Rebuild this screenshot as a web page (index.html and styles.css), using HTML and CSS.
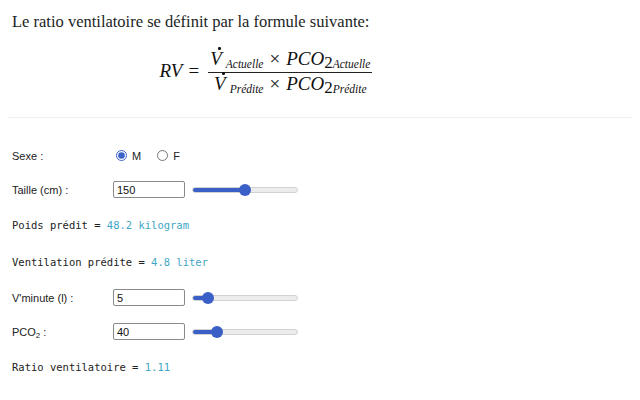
FILE: index.html
```html
<!DOCTYPE html>
<html lang="fr">
<head>
<meta charset="utf-8">
<link rel="stylesheet" href="styles.css">
</head>
<body>
<p class="intro">Le ratio ventilatoire se définit par la formule suivante:</p>
<div class="mathwrap">
  <div class="math">
    <span class="mi">RV</span>
    <span class="eq">=</span>
    <span class="frac">
      <span class="num"><span class="mi vdot">V</span><span class="sub">Actuelle</span><span class="times">×</span><span class="mi">PCO</span><span class="mn">2</span><span class="sub sub2">Actuelle</span></span>
      <span class="bar"></span>
      <span class="den"><span class="mi vdot">V</span><span class="sub">Prédite</span><span class="times">×</span><span class="mi">PCO</span><span class="mn">2</span><span class="sub sub2">Prédite</span></span>
    </span>
  </div>
</div>
<hr class="sep">
<div class="cells">
  <div class="row">
    <span class="label">Sexe :</span>
    <label class="opt"><input type="radio" name="sexe" checked><span>M</span></label>
    <label class="opt"><input type="radio" name="sexe"><span>F</span></label>
  </div>
  <div class="row">
    <span class="label">Taille (cm) :</span>
    <input class="num-in" type="text" value="150">
    <input class="range" type="range" min="100" max="200" value="150" style="--p:50%">
  </div>
  <div class="row out">Poids prédit = <span class="val">48.2 kilogram</span></div>
  <div class="row out">Ventilation prédite = <span class="val">4.8 liter</span></div>
  <div class="row">
    <span class="label">V'minute (l) :</span>
    <input class="num-in" type="text" value="5">
    <input class="range" type="range" min="0" max="50" value="5" style="--p:10%">
  </div>
  <div class="row">
    <span class="label">PCO<sub class="lsub">2</sub> :</span>
    <input class="num-in" type="text" value="40">
    <input class="range" type="range" min="0" max="200" value="40" style="--p:20%">
  </div>
  <div class="row out">Ratio ventilatoire = <span class="val">1.11</span></div>
</div>
</body>
</html>
```
FILE: styles.css
```css
html, body {
  margin: 0;
  padding: 0;
  background: #fff;
  color: #1b1e23;
}
body {
  padding: 0 12px;
}
.intro {
  margin: 0;
  padding-top: 12px;
  font-family: "Liberation Serif", "DejaVu Serif", serif;
  font-size: 16.5px;
  line-height: 20px;
}
.mathwrap {
  width: 508px;
  display: flex;
  justify-content: center;
  margin-top: 14px;
}
.math {
  display: flex;
  align-items: center;
  font-family: "Liberation Serif", serif;
  font-size: 19px;
  line-height: 20px;
  color: #111;
}
.mi {
  font-style: italic;
}
.eq {
  margin: 0 9px 0 6px;
}
.frac {
  display: inline-flex;
  flex-direction: column;
  align-items: center;
}
.num, .den {
  display: flex;
  align-items: baseline;
  white-space: nowrap;
  padding: 0 2px;
}
.num {
  padding-top: 3px;
}
.bar {
  align-self: stretch;
  height: 1px;
  background: #222;
  margin: 1px 0 1px;
}
.vdot {
  position: relative;
  display: inline-block;
}
.vdot::before {
  content: "";
  position: absolute;
  left: 8px;
  top: -2px;
  width: 2.5px;
  height: 2.5px;
  border-radius: 50%;
  background: #111;
}
.sub {
  font-style: italic;
  font-size: 11.5px;
  position: relative;
  top: 3px;
  margin-left: 4px;
}
.sub2 {
  margin-left: 0;
}
.mn {
  font-size: 17px;
  position: relative;
  top: 3px;
}
.times {
  margin: 0 6px;
}
.sep {
  border: 0;
  border-top: 1px solid #f0f0f0;
  margin: 21px -4px 0 -4px;
}
.cells {
  display: flex;
  flex-direction: column;
  gap: 17px;
  margin-top: 29px;
}
.row {
  display: flex;
  align-items: center;
  height: 17px;
  font-family: "Liberation Sans", Arial, sans-serif;
  font-size: 11px;
  color: #222;
}
.row.out {
  height: 20px;
  font-family: "DejaVu Sans Mono", "Liberation Mono", monospace;
  font-size: 10.5px;
  white-space: pre;
  color: #222;
}
.val {
  color: #3fa6c6;
}
.label {
  width: 101px;
  flex: none;
}
.lsub {
  font-size: 8px;
  vertical-align: -2px;
  line-height: 0;
}
.opt {
  display: flex;
  align-items: center;
  margin-right: 13px;
}
.opt input {
  width: 11px;
  height: 11px;
  margin: 0 5px 0 3px;
  accent-color: #3a62c9;
}
.num-in {
  box-sizing: border-box;
  width: 72px;
  height: 17px;
  margin: 0;
  padding: 0 3px;
  border: 1px solid #8a8a8a;
  border-radius: 2px;
  font-family: "Liberation Sans", Arial, sans-serif;
  font-size: 11px;
  color: #111;
}
.range {
  -webkit-appearance: none;
  appearance: none;
  width: 106px;
  height: 6px;
  margin: 0 0 0 7px;
  border-radius: 3px;
  border: 1px solid #d2d2d2;
  box-sizing: border-box;
  background: linear-gradient(to right, #3a5fc6 0, #3a5fc6 calc(6px + (100% - 12px) * var(--p) / 100%), #ececec 0);
}
.range::-webkit-slider-thumb {
  -webkit-appearance: none;
  appearance: none;
  width: 12px;
  height: 12px;
  border-radius: 50%;
  background: #3a5fc6;
  border: 0;
}
```
